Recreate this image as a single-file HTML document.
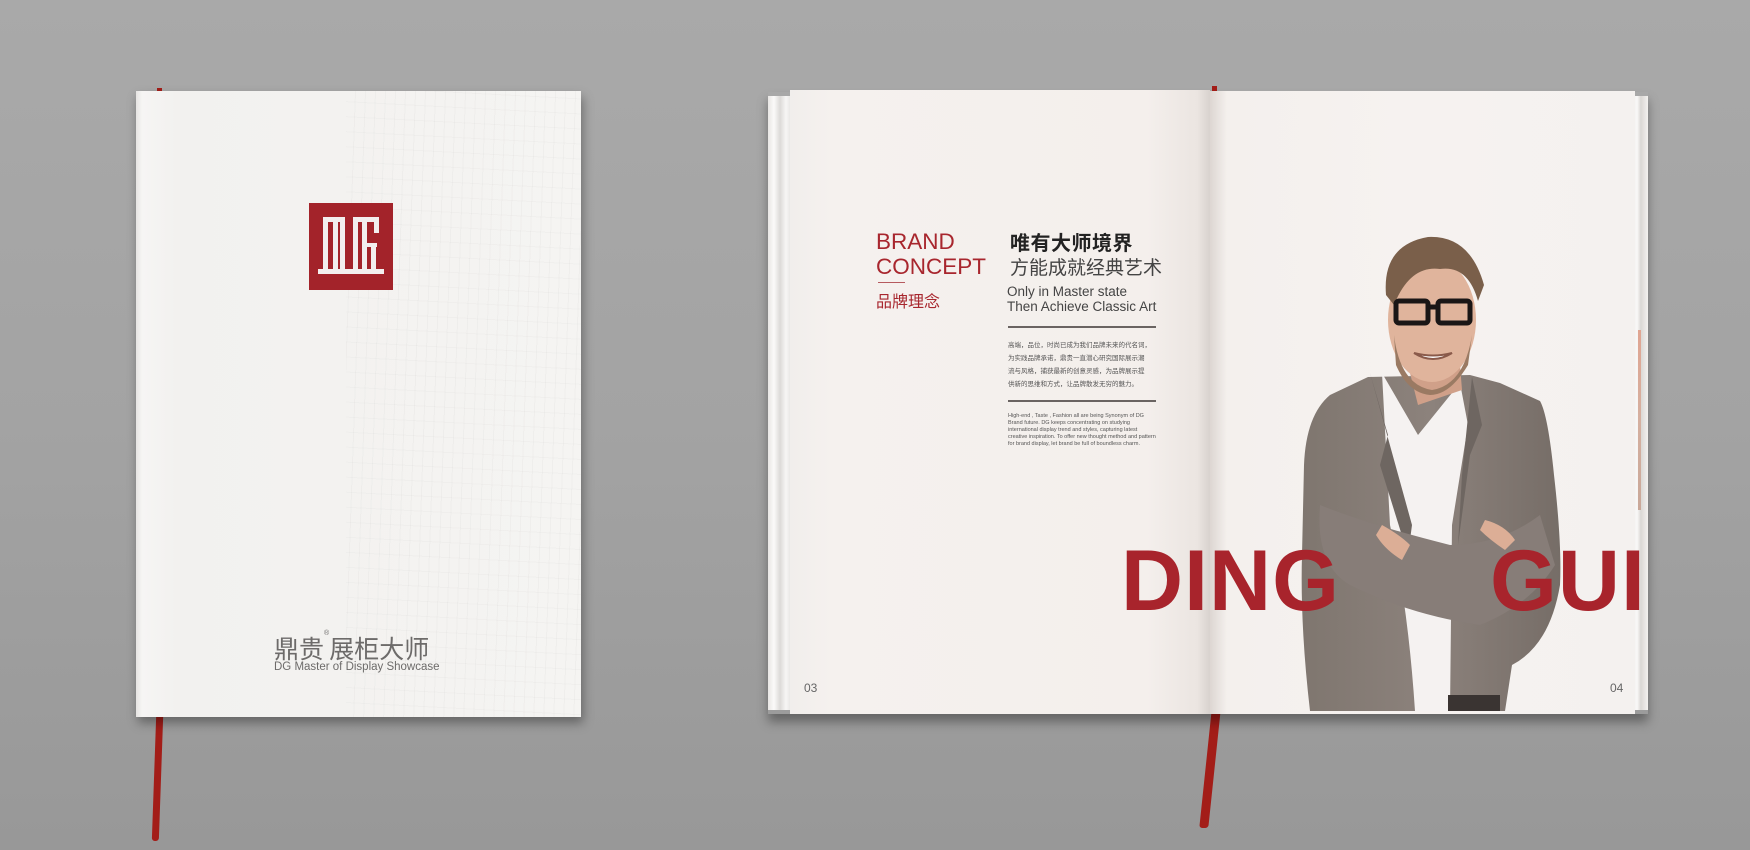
<!DOCTYPE html>
<html><head><meta charset="utf-8"><style>
*{margin:0;padding:0;box-sizing:border-box}
body{width:1750px;height:850px;overflow:hidden;position:relative;background:linear-gradient(180deg,#a9a9a9 0%,#a3a3a3 50%,#989898 100%);font-family:"Liberation Sans","Noto Sans CJK SC",sans-serif}
.abs{position:absolute}
.cover{left:136px;top:91px;width:445px;height:626px;background:linear-gradient(90deg,#e6e4e2 0px,#f6f5f4 6px,#f2f1ef 40px,#f5f4f2 100%);box-shadow:2px 6px 10px rgba(0,0,0,.35)}
.tex{left:210px;top:0;width:235px;height:626px;background:repeating-linear-gradient(92deg,rgba(0,0,0,0) 0 9px,rgba(0,0,0,.025) 9px 10px),repeating-linear-gradient(3deg,rgba(0,0,0,0) 0 14px,rgba(0,0,0,.02) 14px 15px)}
.logo{left:173px;top:112px;width:84px;height:87px;background:#a3232a}
.page{background:#f5f1ee}
.red{color:#a8262e}
</style></head><body>
<div class="abs" style="left:154px;top:716px;width:7px;height:125px;background:#a31d18;border-radius:0 0 3px 3px;transform:skewX(-2deg)"></div>
<div class="abs" style="left:157px;top:88px;width:5px;height:8px;background:#a31d18"></div>
<div class="abs cover">
 <div class="abs tex"></div>
 <div class="abs logo">
  <svg width="84" height="87" viewBox="0 0 84 87">
   <g fill="#f3eeee">
    <rect x="14" y="14" width="22" height="5"/><rect x="14" y="14" width="5" height="55"/><rect x="24" y="19" width="5" height="50"/><rect x="31" y="19" width="5" height="50"/>
    <rect x="44" y="14" width="26" height="5"/><rect x="44" y="14" width="5" height="55"/><rect x="53" y="19" width="5" height="50"/><rect x="62" y="40" width="5" height="29"/><rect x="58" y="40" width="10" height="4"/><rect x="65" y="14" width="5" height="16"/>
    <rect x="9" y="66" width="66" height="5"/>
   </g>
  </svg>
 </div>
 <div class="abs" style="left:138px;top:539px;font-size:25px;color:#6d6b6a;white-space:nowrap">鼎贵<span style="font-size:7px;vertical-align:top">®</span>展柜大师</div>
 <div class="abs" style="left:138px;top:570px;font-size:11.5px;color:#6d6b6a;white-space:nowrap">DG Master of Display Showcase</div>
</div>

<div class="abs" style="left:1206px;top:700px;width:9px;height:128px;background:#a31d18;transform:skew(-6deg);border-radius:0 0 3px 3px"></div>
<div class="abs" style="left:1212px;top:86px;width:5px;height:8px;background:#a31d18"></div>

<div class="abs" style="left:768px;top:92px;width:880px;height:622px;box-shadow:0 8px 10px rgba(0,0,0,.35)"></div>
<div class="abs" style="left:768px;top:96px;width:30px;height:614px;background:linear-gradient(90deg,#e8e6e4,#fbfaf9 20%,#dcdad8 40%,#f7f6f5 60%,#e3e1df 80%,#f2f0ee)"></div>
<div class="abs page" style="left:790px;top:90px;width:420px;height:624px;background:linear-gradient(90deg,#f1eeec,#f5f1ee 10%,#f4efec 85%,#ebe5e1 97%,#d8d2ce)"></div>
<div class="abs" style="left:1630px;top:96px;width:18px;height:614px;background:linear-gradient(90deg,#eceae8,#f9f8f7 40%,#dad7d4 60%,#f3f1ef)"></div>
<div class="abs" style="left:1638px;top:330px;width:3px;height:180px;background:linear-gradient(#e0a592,#d5b0a0,#c9a899)"></div>
<div class="abs page" style="left:1210px;top:91px;width:425px;height:623px;background:linear-gradient(90deg,#ddd6d2,#f4f0ed 4%,#f6f2f0 50%,#f4f1ef)"></div>

<div class="abs red" style="left:876px;top:229px;font-size:22.5px;line-height:25px">BRAND<br>CONCEPT</div>
<div class="abs" style="left:878px;top:282px;width:27px;height:1px;background:#b65a5f"></div>
<div class="abs red" style="left:876px;top:288px;font-size:16px">品牌理念</div>
<div class="abs" style="left:1010px;top:227px;font-size:20px;font-weight:bold;color:#222;letter-spacing:.5px">唯有大师境界</div>
<div class="abs" style="left:1010px;top:253px;font-size:19px;color:#444">方能成就经典艺术</div>
<div class="abs" style="left:1007px;top:284px;font-size:13.5px;line-height:15px;color:#444">Only in Master state<br>Then Achieve Classic Art</div>
<div class="abs" style="left:1008px;top:326px;width:148px;height:2px;background:#6a6462"></div>
<div class="abs" style="left:1008px;top:339px;width:150px;font-size:6.5px;line-height:13px;color:#555;white-space:nowrap">高端，品位，时尚已成为我们品牌未来的代名词，<br>为实践品牌承诺，鼎贵一直潜心研究国际展示潮<br>流与风格，捕获最新的创意灵感，为品牌展示提<br>供新的思维和方式，让品牌散发无穷的魅力。</div>
<div class="abs" style="left:1008px;top:400px;width:148px;height:2px;background:#6a6462"></div>
<div class="abs" style="left:1008px;top:413px;width:150px;font-size:5.5px;line-height:7px;color:#555">High-end , Taste , Fashion all are being Synonym of DG Brand future. DG keeps concentrating on studying international display trend and styles, capturing latest creative inspiration. To offer new thought method and pattern for brand display, let brand be full of boundless charm.</div>
<div class="abs" style="left:804px;top:681px;font-size:12px;color:#666">03</div>
<div class="abs" style="left:1610px;top:681px;font-size:12px;color:#666">04</div>

<svg class="abs" style="left:1290px;top:225px" width="290" height="490" viewBox="0 0 290 490">
 <defs>
  <linearGradient id="jk" x1="0" y1="0" x2="1" y2="0"><stop offset="0" stop-color="#7f766f"/><stop offset=".5" stop-color="#8c827c"/><stop offset="1" stop-color="#766d67"/></linearGradient>
 </defs>
 <path d="M78 152 L40 170 Q16 190 14 240 L12 330 Q10 400 20 486 L215 486 L222 440 Q260 420 270 360 Q272 320 264 250 Q258 190 250 176 L210 158 L180 150 Z" fill="url(#jk)"/>
 <path d="M92 148 L128 210 L170 158 L178 200 L162 300 L160 486 L125 486 Q118 380 100 300 Z" fill="#f5f2f1"/>
 <path d="M80 148 L98 210 L90 240 L118 330 L122 300 Z" fill="#6e6661"/>
 <path d="M182 152 L192 200 L180 230 L168 320 L172 250 Z" fill="#6e6661"/>
 <path d="M30 280 Q80 300 160 320 Q210 320 250 290 L265 340 Q240 380 190 400 Q120 390 60 360 Q25 340 30 280 Z" fill="#877d78"/>
 <path d="M92 300 Q110 310 120 320 L112 335 Q95 325 86 310 Z" fill="#dcae96"/>
 <path d="M195 295 Q215 300 225 315 L215 325 Q200 315 190 305 Z" fill="#dcae96"/>
 <path d="M158 470 L210 470 L210 486 L158 486 Z" fill="#3a3432"/>
 <path d="M118 140 L170 140 L172 165 L128 180 Z" fill="#d0a089"/>
 <ellipse cx="142" cy="95" rx="44" ry="62" fill="#e0b49c"/>
 <path d="M104 110 Q110 160 142 165 Q174 160 182 110 L178 140 Q160 170 140 170 Q118 168 106 140 Z" fill="#9a7a63"/>
 <path d="M96 70 Q92 20 138 12 Q180 10 194 60 L188 76 Q178 40 150 44 Q120 40 104 80 Z" fill="#7a5f4a"/>
 <g fill="none" stroke="#1a1616" stroke-width="5">
  <rect x="106" y="76" width="32" height="22" rx="3"/><rect x="148" y="76" width="32" height="22" rx="3"/><path d="M138 82 L148 82"/>
 </g>
 <path d="M124 128 Q143 140 162 128 Q143 133 124 128 Z" fill="#fff" stroke="#8a5a4a" stroke-width="2"/>
</svg>

<div class="abs red" style="left:1121px;top:531px;font-size:86px;font-weight:bold;letter-spacing:1px;line-height:100px;color:#a8242c">DING</div>
<div class="abs red" style="left:1490px;top:531px;font-size:86px;font-weight:bold;letter-spacing:1px;line-height:100px;color:#a8242c">GUI</div>
</body></html>
